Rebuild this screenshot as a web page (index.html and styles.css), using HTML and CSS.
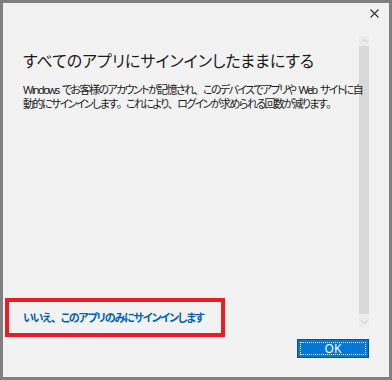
FILE: index.html
```html
<!DOCTYPE html>
<html lang="ja">
<head>
    <meta charset="UTF-8">
    <meta name="viewport" content="width=device-width, initial-scale=1.0">
    <title>すべてのアプリにサインインしたままにする</title>
    <link rel="stylesheet" href="styles.css">
</head>
<body>
    <div class="window">
        <div class="titlebar">
            <button class="close-btn" aria-label="閉じる">
                <svg width="9" height="9" viewBox="0 0 9 9">
                    <path d="M0.5 0.5 L8.5 8.5 M8.5 0.5 L0.5 8.5" stroke="#333" stroke-width="1.1" fill="none"/>
                </svg>
            </button>
        </div>

        <div class="content">
            <div class="main">
                <h1>すべてのアプリにサインインしたままにする</h1>
                <p class="description">Windows でお客様のアカウントが記憶され<span class="punct">、</span>このデバイスでアプリや Web サイトに自<br>動的にサインインします<span class="punct">。</span>これにより<span class="punct">、</span>ログインが求められる回数が減ります<span class="punct">。</span></p>
                <a href="#" class="only-this-app">いいえ<span class="punct">、</span>このアプリのみにサインインします</a>
            </div>
            <div class="scrollbar">
                <div class="arrow">
                    <svg width="7" height="4" viewBox="0 0 7 4"><path d="M0.5 3.5 L3.5 0.5 L6.5 3.5" stroke="#c6c6c6" fill="none"/></svg>
                </div>
                <div class="thumb"></div>
                <div class="arrow">
                    <svg width="7" height="4" viewBox="0 0 7 4"><path d="M0.5 0.5 L3.5 3.5 L6.5 0.5" stroke="#c6c6c6" fill="none"/></svg>
                </div>
            </div>
        </div>

        <div class="footer">
            <button class="ok-btn">OK</button>
        </div>
    </div>
</body>
</html>
```

FILE: styles.css
```css
* {
    margin: 0;
    padding: 0;
    box-sizing: border-box;
}

body {
    background-color: #808080;
    font-family: 'Noto Sans', 'Noto Sans CJK JP', sans-serif;
    font-feature-settings: "palt";
    color: #1a1a1a;
}

.window {
    margin: 3px 3px 0 3px;
    height: 374px;
    background-color: #f2f2f2;
    display: flex;
    flex-direction: column;
}

.titlebar {
    height: 33px;
    display: flex;
    justify-content: flex-end;
    align-items: flex-start;
}

.close-btn {
    background: none;
    border: none;
    width: 30px;
    height: 20px;
    display: flex;
    align-items: center;
    justify-content: center;
}

.content {
    height: 291px;
    display: flex;
}

.main {
    flex: 1;
    padding-left: 20px;
    padding-top: 14px;
    display: flex;
    flex-direction: column;
    min-width: 0;
    position: relative;
    z-index: 1;
}

h1 {
    font-size: 16px;
    font-weight: 400;
    line-height: 22px;
    color: #1a1a1a;
    white-space: nowrap;
}

.description {
    margin-top: 11px;
    font-size: 11px;
    letter-spacing: -1.6px;
    word-spacing: 2px;
    line-height: 14px;
    white-space: nowrap;
    color: #1a1a1a;
    margin-right: -20px;
}

/* full-width punctuation keeps its space, like the system font */
.punct {
    font-feature-settings: normal;
}

.only-this-app {
    align-self: flex-start;
    margin-top: auto;
    margin-left: -14px;
    margin-bottom: -6px;
    padding: 0 17px 0 14px;
    height: 31px;
    line-height: 31px;
    font-size: 11px;
    letter-spacing: -1.2px;
    font-weight: 700;
    color: #0063b1;
    text-decoration: none;
    outline: 4px solid #ed1c24;
}

.scrollbar {
    width: 10px;
    margin-right: 20px;
    display: flex;
    flex-direction: column;
    background-color: #ececec;
}

.arrow {
    height: 10px;
    display: flex;
    align-items: center;
    justify-content: center;
}

.thumb {
    flex: 1;
    background-color: #d9d9d9;
    margin: 0 0 3px 0;
}

.footer {
    flex: 1;
    display: flex;
    justify-content: flex-end;
    align-items: flex-start;
    padding: 12px 20px 0 0;
}

.ok-btn {
    width: 72px;
    height: 19px;
    background-color: #0078d7;
    border: 1px solid #005499;
    outline: 1px dotted #ffffff;
    outline-offset: -4px;
    color: #ffffff;
    font-family: 'Noto Sans', sans-serif;
    font-size: 12px;
    line-height: 16px;
}
```
